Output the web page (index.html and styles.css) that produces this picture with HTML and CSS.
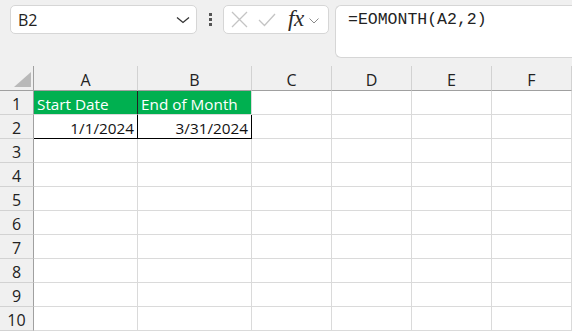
FILE: index.html
```html
<!DOCTYPE html>
<html>
<head>
<meta charset="utf-8">
<link rel="stylesheet" href="styles.css">
</head>
<body>
<div class="toolbar">
  <div class="namebox">
    <span class="ref">B2</span>
    <svg class="chev" width="14" height="8" viewBox="0 0 14 8"><path d="M1 1.5 L7 6.5 L13 1.5" fill="none" stroke="#333" stroke-width="1.3"/></svg>
  </div>
  <div class="dots"><i></i><i></i><i></i></div>
  <div class="fnbox">
    <svg width="17" height="17" viewBox="0 0 17 17"><path d="M1 1 L16 16 M16 1 L1 16" stroke="#c4c4c4" stroke-width="1.3" fill="none"/></svg>
    <svg class="check" width="18" height="14" viewBox="0 0 18 14"><path d="M1 7 L6.5 12.5 L17 1" stroke="#c4c4c4" stroke-width="1.3" fill="none"/></svg>
    <span class="fx">fx</span>
    <svg class="smallchev" width="10" height="6" viewBox="0 0 10 6"><path d="M0.5 0.5 L5 5 L9.5 0.5" fill="none" stroke="#8a8a8a" stroke-width="1"/></svg>
  </div>
  <div class="formula">=EOMONTH(A2,2)</div>
</div>
<div class="sheet">
  <div class="corner"><span class="tri"></span></div>
  <div class="ch">A</div><div class="ch">B</div><div class="ch">C</div><div class="ch">D</div><div class="ch">E</div><div class="ch">F</div>

  <div class="rh">1</div>
  <div class="c hdr sepdark">Start Date</div><div class="c hdr">End of Month</div><div class="c"></div><div class="c"></div><div class="c"></div><div class="c"></div>

  <div class="rh">2</div>
  <div class="c num sel">1/1/2024</div><div class="c num sel">3/31/2024</div><div class="c"></div><div class="c"></div><div class="c"></div><div class="c"></div>

  <div class="rh">3</div><div class="c"></div><div class="c"></div><div class="c"></div><div class="c"></div><div class="c"></div><div class="c"></div>
  <div class="rh">4</div><div class="c"></div><div class="c"></div><div class="c"></div><div class="c"></div><div class="c"></div><div class="c"></div>
  <div class="rh">5</div><div class="c"></div><div class="c"></div><div class="c"></div><div class="c"></div><div class="c"></div><div class="c"></div>
  <div class="rh">6</div><div class="c"></div><div class="c"></div><div class="c"></div><div class="c"></div><div class="c"></div><div class="c"></div>
  <div class="rh">7</div><div class="c"></div><div class="c"></div><div class="c"></div><div class="c"></div><div class="c"></div><div class="c"></div>
  <div class="rh">8</div><div class="c"></div><div class="c"></div><div class="c"></div><div class="c"></div><div class="c"></div><div class="c"></div>
  <div class="rh">9</div><div class="c"></div><div class="c"></div><div class="c"></div><div class="c"></div><div class="c"></div><div class="c"></div>
  <div class="rh">10</div><div class="c"></div><div class="c"></div><div class="c"></div><div class="c"></div><div class="c"></div><div class="c"></div>
</div>
</body>
</html>
```
FILE: styles.css
```css
html, body {
  margin: 0;
  padding: 0;
  background: #f0f0f0;
  overflow: hidden;
}
body {
  width: 572px;
  height: 331px;
  font-family: "Open Sans", "Noto Sans", sans-serif;
  color: #222;
}
.toolbar {
  height: 66px;
  box-sizing: border-box;
  padding: 5px 0 0 10px;
  display: flex;
  align-items: flex-start;
  background: #f0f0f0;
}
.namebox {
  width: 187px;
  height: 29px;
  box-sizing: border-box;
  background: #fff;
  border: 1px solid #d6d6d6;
  border-radius: 5px;
  display: flex;
  align-items: center;
  justify-content: space-between;
  padding: 0 6px 0 7px;
}
.ref {
  font-size: 16px;
  color: #222;
}
.chev { margin-top: 1px; }
.dots {
  width: 26px;
  height: 29px;
  display: flex;
  flex-direction: column;
  align-items: center;
  justify-content: center;
  gap: 2px;
}
.dots i {
  display: block;
  width: 3px;
  height: 3px;
  background: #555;
}
.fnbox {
  width: 106px;
  height: 29px;
  box-sizing: border-box;
  background: #fff;
  border: 1px solid #d6d6d6;
  border-radius: 5px;
  display: flex;
  align-items: center;
  padding: 0 0 0 7px;
}
.check { margin-left: 10px; }
.fx {
  font-family: "Liberation Serif", "DejaVu Serif", serif;
  font-style: italic;
  font-size: 23px;
  color: #2a2a2a;
  margin-left: 12px;
  line-height: 1;
  margin-top: -3px;
  letter-spacing: -0.5px;
}
.smallchev { margin-left: 5px; margin-top: 2px; }
.formula {
  margin-left: 6px;
  width: 260px;
  height: 53px;
  box-sizing: border-box;
  background: #fff;
  border: 1px solid #d6d6d6;
  border-right: none;
  border-radius: 6px 0 0 6px;
  font-family: "Liberation Mono", "DejaVu Sans Mono", monospace;
  font-size: 16.5px;
  padding: 4px 0 0 12px;
  color: #222;
  flex: 1;
}
.sheet {
  display: grid;
  grid-template-columns: 34px 104px 114px 80px 80px 80px 80px;
  grid-template-rows: 25px repeat(10, 24px);
  background: #fff;
}
.corner {
  background: #f0f0f0;
  border-right: 1px solid #a0a0a0;
  border-bottom: 1px solid #a0a0a0;
  box-sizing: border-box;
  position: relative;
}
.tri {
  position: absolute;
  right: 2px;
  bottom: 3px;
  width: 0;
  height: 0;
  border-left: 17px solid transparent;
  border-bottom: 15px solid #b9b9b9;
}
.ch {
  background: #f0f0f0;
  border-right: 1px solid #d2d2d2;
  border-bottom: 1px solid #a0a0a0;
  box-sizing: border-box;
  display: flex;
  align-items: center;
  justify-content: center;
  font-size: 16px;
  padding-top: 3px;
}
.rh {
  background: #f0f0f0;
  border-right: 1px solid #a0a0a0;
  border-bottom: 1px solid #d2d2d2;
  box-sizing: border-box;
  display: flex;
  align-items: center;
  justify-content: center;
  font-size: 16px;
  padding-top: 2px;
}
.c {
  border-right: 1px solid #dadada;
  border-bottom: 1px solid #dadada;
  box-sizing: border-box;
  font-size: 15.3px;
  display: flex;
  align-items: center;
  padding: 2px 3px 0 3px;
  white-space: nowrap;
  overflow: hidden;
}
.hdr {
  background: #00b050;
  color: #fff;
  border-bottom-color: #dadada;
}
.sepdark { border-right-color: #222; }
.num { justify-content: flex-end; color: #111; }
.sel {
  border-right: 1px solid #000;
  border-bottom: 1px solid #000;
}
```
